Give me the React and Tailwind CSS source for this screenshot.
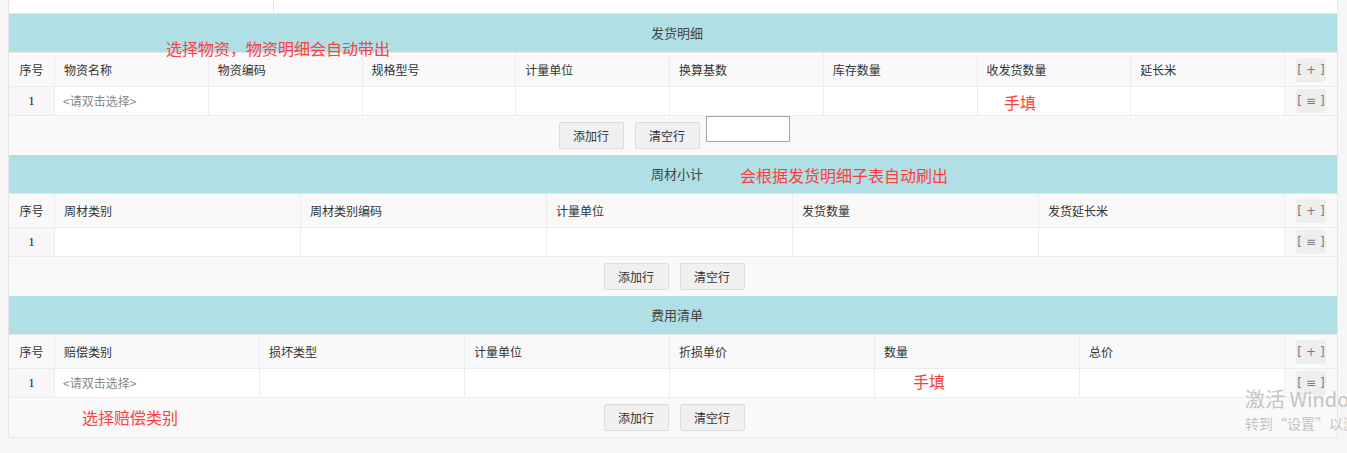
const font = "font-['Noto_Sans_CJK_SC','Noto_Sans',sans-serif]";

function ActionBox({ sign }) {
  return (
    <div className="flex h-[24px] w-[30px] items-center justify-center gap-[4px] rounded-[3px] bg-[#eeeeee] font-['DejaVu_Sans',sans-serif] text-[12px] text-[#7a7a7a]">
      <span>[</span>
      <span>{sign}</span>
      <span>]</span>
    </div>
  );
}

function Section({ title, cols, row, extraInput }) {
  return (
    <div>
      {/* title bar */}
      <div className="flex h-[39px] items-center justify-center border-b border-[#e6e6e6] bg-[#b0dfe5] pl-[8px] text-[13px] text-[#444]">
        {title}
      </div>
      {/* header row */}
      <div className="flex h-[34px] border-b border-[#ececec] bg-[#f9f9f9] text-[12px] text-[#333]">
        <div className="flex w-[46px] shrink-0 items-center justify-center border-r border-[#ececec]">序号</div>
        {cols.map((c) => (
          <div key={c} className="flex min-w-0 flex-1 basis-0 items-center border-r border-[#ececec] pl-[9px]">
            {c}
          </div>
        ))}
        <div className="flex w-[52px] shrink-0 items-center justify-center">
          <ActionBox sign="+" />
        </div>
      </div>
      {/* data row */}
      <div className="flex h-[29px] border-b border-[#ececec] bg-white text-[12px]">
        <div className="flex w-[46px] shrink-0 items-center justify-center border-r border-[#ececec] bg-[#f8f6f8] font-['Liberation_Serif',serif] text-[13px] text-[#222]">
          1
        </div>
        {cols.map((c, i) => (
          <div key={c} className="flex min-w-0 flex-1 basis-0 items-center border-r border-[#ececec] pl-[8px] text-[#888]">
            {i === 0 ? row : ""}
          </div>
        ))}
        <div className="flex w-[52px] shrink-0 items-center justify-center bg-[#f9f9f9]">
          <ActionBox sign="≡" />
        </div>
      </div>
      {/* buttons */}
      <div className="flex h-[39px] items-start justify-center gap-[11px] bg-[#f9f9f9] pl-[2px] text-[12px] text-[#333]">
        <button className="mt-[6px] h-[27px] w-[65px] rounded-[2px] border border-[#dcdcdc] bg-[#f0f0f0]">添加行</button>
        <button className="mt-[6px] h-[27px] w-[65px] rounded-[2px] border border-[#dcdcdc] bg-[#f0f0f0]">清空行</button>
        {extraInput && <div className="-ml-[5px] h-[26px] w-[84px] border border-[#a9a9a9] bg-white"></div>}
      </div>
    </div>
  );
}

export default function App() {
  return (
    <div className={`relative h-[453px] w-[1347px] overflow-hidden bg-[#f7f7f7] ${font}`}>
      <div className="ml-[8px] w-[1330px] border-x border-b border-[#e6e6e6] bg-white">
        {/* top strip */}
        <div className="flex h-[14px] border-b border-[#e6e6e6]">
          <div className="w-[265px] border-r border-[#e6e6e6]"></div>
          <div className="flex-1"></div>
        </div>
        <Section
          title="发货明细"
          cols={["物资名称", "物资编码", "规格型号", "计量单位", "换算基数", "库存数量", "收发货数量", "延长米"]}
          row="<请双击选择>"
          extraInput
        />
        <Section
          title="周材小计"
          cols={["周材类别", "周材类别编码", "计量单位", "发货数量", "发货延长米"]}
          row=""
        />
        <Section
          title="费用清单"
          cols={["赔偿类别", "损坏类型", "计量单位", "折损单价", "数量", "总价"]}
          row="<请双击选择>"
        />
      </div>

      {/* red annotations */}
      <div className="absolute left-[166px] top-[36px] text-[16px] text-[#ff3d3d]">选择物资，物资明细会自动带出</div>
      <div className="absolute left-[1004px] top-[90px] text-[16px] text-[#ff3d3d]">手填</div>
      <div className="absolute left-[740px] top-[163px] text-[16px] text-[#ff3d3d]">会根据发货明细子表自动刷出</div>
      <div className="absolute left-[913px] top-[369px] text-[16px] text-[#ff3d3d]">手填</div>
      <div className="absolute left-[82px] top-[405px] text-[16px] text-[#ff3d3d]">选择赔偿类别</div>

      {/* windows watermark */}
      <div className="absolute left-[1245px] top-[386px] whitespace-nowrap text-[20px] leading-[26px] text-[#c4c4c4]">激活 Windows</div>
      <div className="absolute left-[1245px] top-[413px] whitespace-nowrap text-[14px] leading-[20px] text-[#c4c4c4]">转到“设置”以激活 Windows。</div>
    </div>
  );
}
